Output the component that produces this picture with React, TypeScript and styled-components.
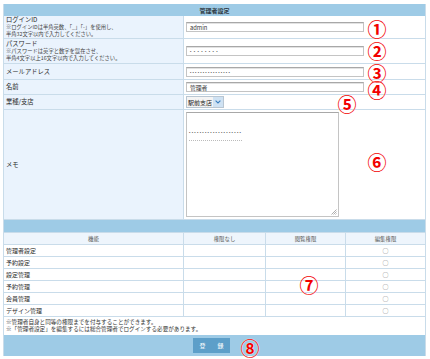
import React from 'react';
import styled, { createGlobalStyle } from 'styled-components';

const GlobalStyle = createGlobalStyle`
  html, body { margin: 0; padding: 0; background: #fff; }
  body {
    font-family: "Noto Sans CJK JP", "Noto Sans", sans-serif;
    color: #333;
  }
  * { box-sizing: border-box; }
`;

const BLUE = '#9ecbe6';
const LINE = '#c9dcea';
const LABEL_BG = '#eaf3fd';

const Page = styled.div`
  position: relative;
  width: 430px;
  height: 359px;
  padding: 4px 4px 0 3px;
`;

const Panel = styled.div`
  width: 423px;
  border-left: 1px solid ${LINE};
  border-right: 1px solid ${LINE};
  display: flex;
  flex-direction: column;
`;

const TitleBar = styled.div`
  height: 12px;
  background: ${BLUE};
  display: flex;
  align-items: center;
  justify-content: center;
  font-size: 6px;
  font-weight: bold;
  color: #2f3a44;
`;

const FormRow = styled.div<{ $h: number }>`
  display: grid;
  grid-template-columns: 180px 1fr;
  height: ${(p) => p.$h}px;
  border-bottom: 1px solid ${LINE};
`;

const Label = styled.div`
  background: ${LABEL_BG};
  border-right: 1px solid ${LINE};
  padding: 0 2px;
  display: flex;
  flex-direction: column;
  justify-content: center;
`;

const LabelTitle = styled.div`
  font-size: 6.3px;
  line-height: 8px;
  color: #2b2b2b;
`;

const LabelNote = styled.div`
  font-size: 5.3px;
  line-height: 7px;
  color: #444;
  white-space: nowrap;
`;

const Value = styled.div`
  display: flex;
  align-items: center;
  padding-left: 2px;
`;

const TextInput = styled.div<{ $w: number }>`
  width: ${(p) => p.$w}px;
  height: 10px;
  border: 1px solid #c4c4c4;
  border-top-color: #a8a8a8;
  box-shadow: inset 0 1px 0 #e2e2e2;
  background: #fff;
  display: flex;
  align-items: center;
  padding-left: 3px;
  font-size: 5.8px;
  color: #333;
`;

const Dots = styled.span<{ $gap: number }>`
  font-size: 4px;
  letter-spacing: ${(p) => p.$gap}px;
  color: #555;
  line-height: 1;
  white-space: nowrap;
`;

const SelectBox = styled.div`
  height: 12px;
  display: flex;
  align-items: stretch;
  border: 1px solid #b9c6d2;
  background: #f4f4f4;
  font-size: 6px;
  color: #222;
`;

const SelectText = styled.div`
  display: flex;
  align-items: center;
  padding: 0 1px;
`;

const SelectArrow = styled.div`
  width: 10px;
  background: #cfe2f3;
  display: flex;
  align-items: center;
  justify-content: center;
`;

const TextArea = styled.div`
  position: relative;
  width: 153px;
  height: 105px;
  border: 1px solid #c4c4c4;
  border-top-color: #a8a8a8;
  background: #fff;
  padding: 2px 2px;
  align-self: flex-start;
  margin-top: 2px;
`;

const MemoLine = styled.div`
  display: inline-block;
  white-space: nowrap;
  border-bottom: 1px dotted #bbb;
  padding-bottom: 1px;
`;

const Grip = styled.svg`
  position: absolute;
  right: 1px;
  bottom: 1px;
`;

const BlueBar = styled.div<{ $h: number }>`
  height: ${(p) => p.$h}px;
  background: ${BLUE};
  border-bottom: 1px solid ${LINE};
`;

const PermRow = styled.div<{ $head?: boolean }>`
  display: grid;
  grid-template-columns: 180px 82px 80px 1fr;
  height: 12px;
  border-bottom: 1px solid ${LINE};
  background: ${(p) => (p.$head ? '#eef5fc' : '#fff')};
`;

const PermCell = styled.div<{ $align?: 'left' | 'center'; $head?: boolean }>`
  display: flex;
  align-items: center;
  justify-content: ${(p) => (p.$align === 'left' ? 'flex-start' : 'center')};
  padding-left: ${(p) => (p.$align === 'left' ? '2px' : '0')};
  border-right: 1px solid ${LINE};
  font-size: ${(p) => (p.$head ? '5.4px' : '6px')};
  color: ${(p) => (p.$head ? '#555' : '#2b2b2b')};
  &:last-child { border-right: none; }
`;

const Circle = styled.span`
  font-size: 6px;
  color: #777;
`;

const Notes = styled.div`
  height: 18px;
  padding: 2px 2px 0;
  font-size: 5.6px;
  line-height: 7px;
  color: #333;
`;

const FooterBar = styled.div`
  height: 21px;
  background: ${BLUE};
  display: flex;
  align-items: center;
  padding-left: 189px;
`;

const SubmitButton = styled.button`
  width: 37px;
  height: 15px;
  border: none;
  background: #5d9fc9;
  color: #fff;
  font-family: inherit;
  font-size: 6px;
  letter-spacing: 3px;
  padding: 0 0 0 3px;
  display: flex;
  align-items: center;
  justify-content: center;
`;

const Marker = styled.span<{ $x: number; $y: number }>`
  position: absolute;
  left: ${(p) => p.$x}px;
  top: ${(p) => p.$y}px;
  width: 20px;
  height: 20px;
  margin: -10px 0 0 -10px;
  display: flex;
  align-items: center;
  justify-content: center;
  font-family: "Noto Sans CJK JP", sans-serif;
  font-size: 19px;
  font-weight: 700;
  line-height: 1;
  color: #f20000;
  text-shadow: 0 0 1px #fff, 0 0 1px #fff;
`;

const functions = ['管理者設定', '予約設定', '設定管理', '予約管理', '会員管理', 'デザイン管理'];

const markers: { n: string; x: number; y: number }[] = [
  { n: '①', x: 377, y: 28 },
  { n: '②', x: 377, y: 50 },
  { n: '③', x: 377, y: 72 },
  { n: '④', x: 377, y: 89 },
  { n: '⑤', x: 347, y: 103 },
  { n: '⑥', x: 377, y: 161 },
  { n: '⑦', x: 309, y: 284 },
  { n: '⑧', x: 250, y: 347 },
];

export default function App() {
  return (
    <>
      <GlobalStyle />
      <Page>
        <Panel>
          <TitleBar>管理者設定</TitleBar>

          <FormRow $h={23}>
            <Label>
              <LabelTitle>ログインID</LabelTitle>
              <LabelNote>※ログインIDは半角英数、「_」「-」を使用し、</LabelNote>
              <LabelNote>半角32文字以内で入力してください。</LabelNote>
            </Label>
            <Value>
              <TextInput $w={178}>admin</TextInput>
            </Value>
          </FormRow>

          <FormRow $h={25}>
            <Label>
              <LabelTitle>パスワード</LabelTitle>
              <LabelNote>※パスワードは英字と数字を混在させ、</LabelNote>
              <LabelNote>半角4文字以上16文字以内で入力してください。</LabelNote>
            </Label>
            <Value>
              <TextInput $w={178}>
                <Dots $gap={2.4}>••••••••</Dots>
              </TextInput>
            </Value>
          </FormRow>

          <FormRow $h={16}>
            <Label>
              <LabelTitle>メールアドレス</LabelTitle>
            </Label>
            <Value>
              <TextInput $w={178}>
                <Dots $gap={1.2}>••••••••••••••••</Dots>
              </TextInput>
            </Value>
          </FormRow>

          <FormRow $h={15}>
            <Label>
              <LabelTitle>名前</LabelTitle>
            </Label>
            <Value>
              <TextInput $w={178}>管理者</TextInput>
            </Value>
          </FormRow>

          <FormRow $h={15}>
            <Label>
              <LabelTitle>業種/支店</LabelTitle>
            </Label>
            <Value>
              <SelectBox>
                <SelectText>駅前支店</SelectText>
                <SelectArrow>
                  <svg width="6" height="4" viewBox="0 0 6 4">
                    <path d="M0.6 0.6 L3 3 L5.4 0.6" fill="none" stroke="#3a7fc0" strokeWidth="1.1" />
                  </svg>
                </SelectArrow>
              </SelectBox>
            </Value>
          </FormRow>

          <FormRow $h={110}>
            <Label>
              <LabelTitle>メモ</LabelTitle>
            </Label>
            <Value>
              <TextArea>
                <MemoLine>
                  <Dots $gap={1.3}>••••••••••••••••••••</Dots>
                </MemoLine>
                <Grip width="6" height="6" viewBox="0 0 6 6">
                  <path d="M5.5 0.5 L0.5 5.5 M5.5 2.5 L2.5 5.5 M5.5 4.5 L4.5 5.5" stroke="#999" strokeWidth="0.8" />
                </Grip>
              </TextArea>
            </Value>
          </FormRow>

          <BlueBar $h={13} />

          <PermRow $head>
            <PermCell $head>機能</PermCell>
            <PermCell $head>権限なし</PermCell>
            <PermCell $head>閲覧権限</PermCell>
            <PermCell $head>編集権限</PermCell>
          </PermRow>
          {functions.map((f) => (
            <PermRow key={f}>
              <PermCell $align="left">{f}</PermCell>
              <PermCell />
              <PermCell />
              <PermCell>
                <Circle>○</Circle>
              </PermCell>
            </PermRow>
          ))}

          <Notes>
            <div>※管理者自身と同等の権限までを付与することができます。</div>
            <div>※「管理者設定」を編集するには総合管理者でログインする必要があります。</div>
          </Notes>

          <FooterBar>
            <SubmitButton type="button">登　録</SubmitButton>
          </FooterBar>
        </Panel>

        {markers.map((m) => (
          <Marker key={m.n} $x={m.x} $y={m.y}>
            {m.n}
          </Marker>
        ))}
      </Page>
    </>
  );
}
